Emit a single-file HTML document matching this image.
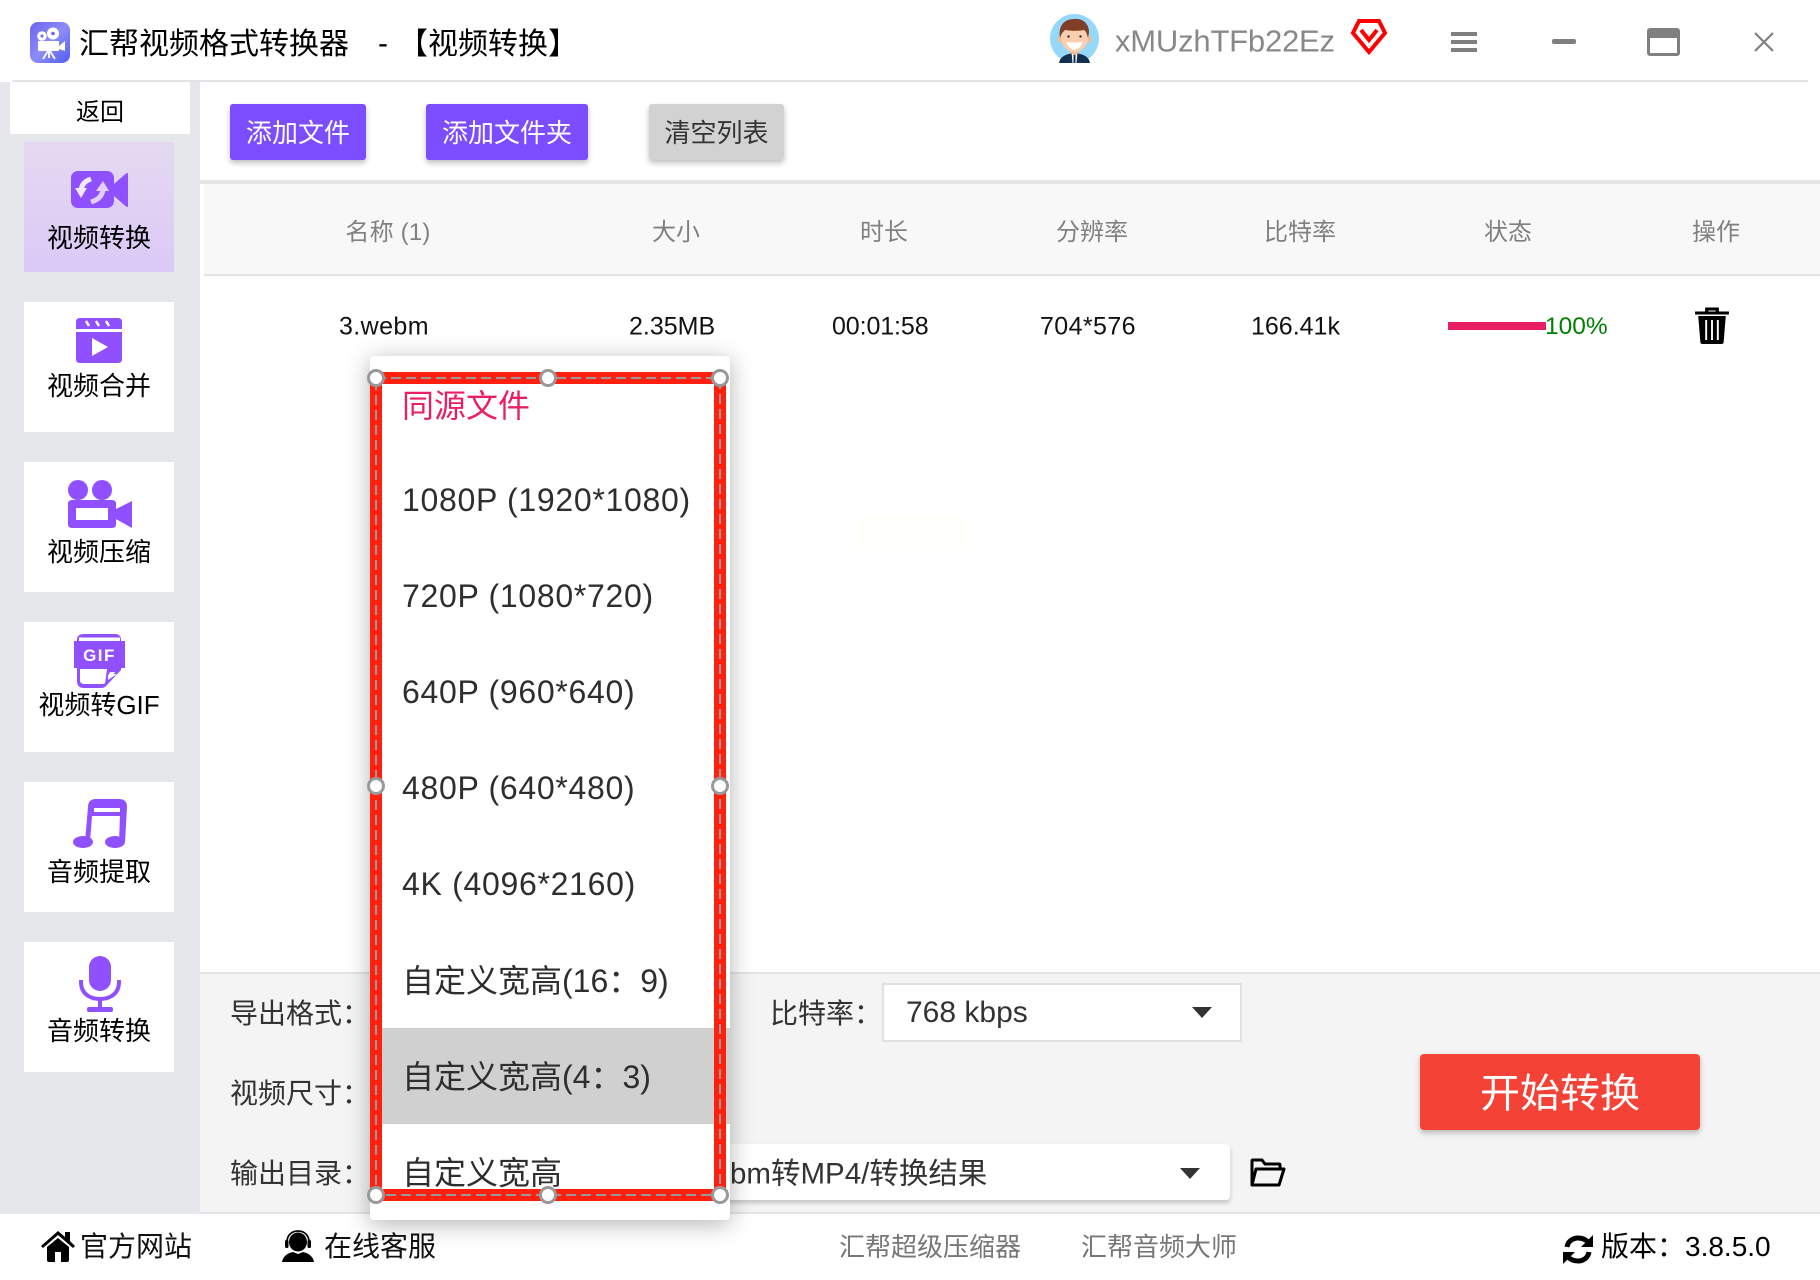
<!DOCTYPE html>
<html lang="zh-CN">
<head>
<meta charset="utf-8">
<title>汇帮视频格式转换器</title>
<style>
html,body{margin:0;padding:0;background:#fff}
#app{position:relative;width:1820px;height:1280px;overflow:hidden;background:#fff;font-family:"Liberation Sans","Noto Sans CJK SC",sans-serif;color:#000}
.a{position:absolute}
.t{position:absolute;white-space:nowrap;line-height:1;transform:translateY(-50%)}
.c{transform:translate(-50%,-50%)}
.nav{position:absolute;left:24px;width:150px;height:130px;background:#fff}
.btn{position:absolute;top:104px;height:56px;border-radius:3px;background:#7c4dff;color:#fff;font-size:26px;line-height:59px;text-align:center;box-shadow:0 3px 6px rgba(0,0,0,.25)}
.th{color:#808080;font-size:24px}
.td{font-size:25px;color:#111}
.it{position:absolute;left:0;width:360px;height:96px;line-height:98px;padding-left:32px;box-sizing:border-box;font-size:32px;color:#2e2e2e;white-space:nowrap}
.la{letter-spacing:.7px;line-height:96px}
.lab{font-size:28px;color:#333}
svg{position:absolute;display:block;overflow:visible}
</style>
</head>
<body>
<div id="app">
  <!-- title bar -->
  <svg style="left:30px;top:22px" width="40" height="41" viewBox="0 0 40 41">
    <defs><linearGradient id="lg" x1="0" y1="0" x2="1" y2="1"><stop offset="0" stop-color="#6a64ee"/><stop offset=".5" stop-color="#8d8cf8"/><stop offset="1" stop-color="#4f5cf0"/></linearGradient></defs>
    <rect width="40" height="41" rx="8" fill="url(#lg)"/>
    <circle cx="12" cy="14" r="4.8" fill="#fff"/><circle cx="23" cy="11.5" r="6" fill="#fff"/>
    <circle cx="12" cy="14" r="1.5" fill="#6a64ee"/><circle cx="23" cy="11.5" r="1.8" fill="#6a64ee"/>
    <path d="M8 19H29V29H8ZM29 24L35 19V29L29 27Z" fill="#fff"/>
    <path d="M18 29L13 37M19 29V36M20 29L25 37" stroke="#fff" stroke-width="1.8" fill="none"/>
  </svg>
  <div class="t" style="left:79px;top:45px;font-size:30px;color:#000">汇帮视频格式转换器</div>
  <div class="t" style="left:378px;top:44px;font-size:30px;color:#000">-</div>
  <div class="t" style="left:398px;top:45px;font-size:30px;color:#000">【视频转换】</div>

  <svg style="left:1050px;top:14px" width="49" height="49" viewBox="0 0 49 49">
    <circle cx="24.500" cy="24.500" r="24.500" fill="#95d8fb"/>
    <path d="M9 49c1-6 6-9 15.500-10 9.500 1 14.500 4 15.500 10Z" fill="#13304f"/>
    <path d="M21.500 38h6l-1 11h-4z" fill="#fff"/><path d="M23.500 40h2v9h-2z" fill="#13304f"/>
    <ellipse cx="10.500" cy="25" rx="2.800" ry="3.800" fill="#f2b995"/><ellipse cx="38.500" cy="25" rx="2.800" ry="3.800" fill="#f2b995"/>
    <path d="M20 32h9v7l-4.500 2-4.500-2z" fill="#f2b995"/>
    <ellipse cx="24.500" cy="24" rx="13.500" ry="14" fill="#f9cfae"/>
    <path d="M10 24c-2-12 4-19 14-19 10-1 15 6 15 13l-1 6c-1-4-2-7-4-8-5 1-13 1-19 0-2 2-4 4-5 8z" fill="#7e3f26"/>
    <path d="M16.500 27.500c4 1.500 12 1.500 16 0-1 6-5 8-8 8s-7-2-8-8z" fill="#fff"/>
    <circle cx="18.500" cy="22.500" r="1.200" fill="#333"/><circle cx="30.500" cy="22.500" r="1.200" fill="#333"/>
  </svg>
  <div class="t" style="left:1115px;top:41px;font-size:31px;color:#888;letter-spacing:-.2px">xMUzhTFb22Ez</div>
  <svg style="left:1351px;top:19px" width="36" height="35" viewBox="0 0 36 35">
    <path d="M8 2H28L34 14L18 33L2 14Z" fill="none" stroke="#f00" stroke-width="4" stroke-linejoin="miter"/>
    <path d="M10 11L18 21L26 11" fill="none" stroke="#f00" stroke-width="4"/>
  </svg>
  <div class="a" style="left:1451px;top:32px;width:26px;height:4px;background:#808080"></div>
  <div class="a" style="left:1451px;top:40px;width:26px;height:4px;background:#808080"></div>
  <div class="a" style="left:1451px;top:48px;width:26px;height:4px;background:#808080"></div>
  <div class="a" style="left:1552px;top:39px;width:24px;height:5px;border-radius:2px;background:#808080"></div>
  <div class="a" style="left:1647px;top:28px;width:33px;height:28px;box-sizing:border-box;border:3px solid #808080;border-top-width:10px;border-radius:3px"></div>
  <svg style="left:1754px;top:33px" width="20" height="18" viewBox="0 0 20 18"><path d="M1 0L19 18M19 0L1 18" stroke="#808080" stroke-width="2.200" fill="none"/></svg>
  <div class="a" style="left:12px;top:80px;width:1796px;height:2px;background:#e4e4e4"></div>

  <!-- sidebar -->
  <div class="a" style="left:0;top:82px;width:200px;height:1132px;background:#e5e7eb"></div>
  <div class="a" style="left:10px;top:82px;width:180px;height:52px;background:#fff"></div>
  <div class="t c" style="left:100px;top:113px;font-size:24px;color:#000">返回</div>

  <div class="nav" style="top:142px;background:linear-gradient(#e5d9f0,#dbc9f7)"></div>
  <div class="nav" style="top:302px"></div>
  <div class="nav" style="top:462px"></div>
  <div class="nav" style="top:622px"></div>
  <div class="nav" style="top:782px"></div>
  <div class="nav" style="top:942px"></div>

  <svg style="left:70px;top:169px" width="60" height="42" viewBox="0 0 60 42">
    <rect x="1" y="2" width="43" height="37" rx="7" fill="#8f50ff"/>
    <path d="M42 18L57 5V37L42 24Z" fill="#8f50ff" stroke="#8f50ff" stroke-width="2" stroke-linejoin="round"/>
    <path d="M21 10C15 12 12 15 11 21" fill="none" stroke="#f0e8fd" stroke-width="5"/>
    <path d="M5 19H17L11 29Z" fill="#f0e8fd"/>
    <path d="M21 33C28 31 32 27 33 21" fill="none" stroke="#e2d0fb" stroke-width="5"/>
    <path d="M26 22H39L33 12Z" fill="#e2d0fb"/>
  </svg>
  <div class="t c" style="left:99px;top:238px;font-size:26px;color:#000">视频转换</div>

  <svg style="left:76px;top:318px" width="46" height="45" viewBox="0 0 46 45">
    <path d="M0 11V4Q0 0 4 0H42Q46 0 46 4V11Z" fill="#9150ff"/>
    <path d="M10 3L13 8M20 3L23 8M30 3L33 8" stroke="#fff" stroke-width="2.500"/>
    <path d="M0 14H46V41Q46 45 42 45H4Q0 45 0 41Z" fill="#9150ff"/>
    <path d="M16 20L32 29L16 38Z" fill="#fff"/>
  </svg>
  <div class="t c" style="left:99px;top:386px;font-size:26px;color:#000">视频合并</div>

  <svg style="left:68px;top:480px" width="64" height="48" viewBox="0 0 64 48">
    <circle cx="10" cy="10" r="10" fill="#9150ff"/><circle cx="34" cy="10" r="10" fill="#9150ff"/>
    <path d="M4 20H44Q48 20 48 24V44Q48 48 44 48H4Q0 48 0 44V24Q0 20 4 20ZM8 28V40H40V28Z" fill="#9150ff" fill-rule="evenodd"/>
    <path d="M46 30L64 21V48L46 38Z" fill="#9150ff"/>
  </svg>
  <div class="t c" style="left:99px;top:552px;font-size:26px;color:#000">视频压缩</div>

  <svg style="left:74px;top:634px" width="51" height="54" viewBox="0 0 51 54">
    <path d="M10 0H41Q47 0 47 6V7H51V34H47V36L33 51Q31 54 27 54H10Q3 54 3 47V34H0V7H3V6Q3 0 10 0Z" fill="#9150ff"/>
    <path d="M5 3.500H46V7H5Z" fill="#fff"/>
    <path d="M6 35H44L30 50H10Q6 50 6 46Z" fill="#fff"/>
    <path d="M33 35H45L43 38H37Q35 38 35 41V46L31 50Z" fill="#9150ff"/>
    <path d="M34 46V42Q34 40 37 40H43Z" fill="#fff"/>
    <text x="25.500" y="27" text-anchor="middle" font-family="Liberation Sans,sans-serif" font-weight="700" font-size="17" fill="#fff" letter-spacing="1.500">GIF</text>
  </svg>
  <div class="t c" style="left:99px;top:705px;font-size:26px;color:#000">视频转GIF</div>

  <svg style="left:73px;top:799px" width="54" height="50" viewBox="0 0 54 50">
    <ellipse cx="10" cy="43" rx="10" ry="6" fill="#9150ff"/><ellipse cx="42" cy="43" rx="10" ry="6" fill="#9150ff"/>
    <path d="M12 43L15 8Q15 0 23 0H46Q54 0 54 8L52 43H46L47 17H19L17 43Z" fill="#9150ff"/>
    <path d="M21 9H47V13H21Z" fill="#fff"/>
  </svg>
  <div class="t c" style="left:99px;top:872px;font-size:26px;color:#000">音频提取</div>

  <svg style="left:79px;top:956px" width="42" height="56" viewBox="0 0 42 56">
    <rect x="10" y="0" width="22" height="35" rx="11" fill="#9150ff"/>
    <path d="M2 24V26C2 37 10 43 21 43S40 37 40 26V24" fill="none" stroke="#9150ff" stroke-width="4"/>
    <path d="M19 43H23V51H19Z" fill="#9150ff"/>
    <rect x="8" y="51" width="26" height="5" rx="2" fill="#9150ff"/>
  </svg>
  <div class="t c" style="left:99px;top:1031px;font-size:26px;color:#000">音频转换</div>

  <!-- toolbar -->
  <div class="btn" style="left:230px;width:136px">添加文件</div>
  <div class="btn" style="left:426px;width:162px">添加文件夹</div>
  <div class="btn" style="left:649px;width:135px;background:#d2d2d2;color:#333">清空列表</div>
  <div class="a" style="left:200px;top:180px;width:1620px;height:4px;background:#e4e4e4"></div>

  <!-- table -->
  <div class="a" style="left:204px;top:184px;width:1616px;height:90px;background:#f8f8f8"></div>
  <div class="a" style="left:204px;top:274px;width:1616px;height:2px;background:#e4e4e4"></div>
  <div class="t c th" style="left:388px;top:233px;letter-spacing:.2px">名称 (1)</div>
  <div class="t c th" style="left:676px;top:233px">大小</div>
  <div class="t c th" style="left:884px;top:233px">时长</div>
  <div class="t c th" style="left:1092px;top:233px">分辨率</div>
  <div class="t c th" style="left:1300px;top:233px">比特率</div>
  <div class="t c th" style="left:1508px;top:233px">状态</div>
  <div class="t c th" style="left:1716px;top:233px">操作</div>

  <div class="t td" style="left:339px;top:327px;letter-spacing:.4px">3.webm</div>
  <div class="t td" style="left:629px;top:327px">2.35MB</div>
  <div class="t td" style="left:832px;top:327px;letter-spacing:-.1px">00:01:58</div>
  <div class="t td" style="left:1040px;top:327px;letter-spacing:.4px">704*576</div>
  <div class="t td" style="left:1251px;top:327px">166.41k</div>
  <div class="a" style="left:1448px;top:322px;width:98px;height:8px;background:#e91e63"></div>
  <div class="t" style="left:1545px;top:327px;color:#008000;font-size:24.500px">100%</div>
  <svg style="left:1694px;top:307px" width="36" height="38" viewBox="0 0 34 38" preserveAspectRatio="none">
    <path d="M1 6H33M12 5V2H22V5" fill="none" stroke="#000" stroke-width="3"/>
    <path d="M4 9H30L28 35Q28 37 26 37H8Q6 37 6 35Z" fill="#000"/>
    <path d="M11.500 13V33M17 13V33M22.500 13V33" stroke="#fff" stroke-width="1.800"/>
  </svg>

  <!-- watermark -->
  <div class="a" style="left:854px;top:517px;width:116px;height:33px;background:#fffffc"></div>

  <!-- bottom panel -->
  <div class="a" style="left:200px;top:972px;width:1620px;height:242px;background:#f4f4f4"></div>
  <div class="a" style="left:200px;top:972px;width:1620px;height:2px;background:#e4e4e4"></div>
  <div class="a" style="left:200px;top:1212px;width:1620px;height:2px;background:#e4e4e4"></div>

  <div class="t lab" style="left:230px;top:1014px">导出格式：</div>
  <div class="t lab" style="left:230px;top:1094px">视频尺寸：</div>
  <div class="t lab" style="left:230px;top:1174px">输出目录：</div>
  <div class="t lab" style="left:770px;top:1014px">比特率：</div>

  <div class="a" style="left:882px;top:983px;width:360px;height:59px;box-sizing:border-box;background:#fff;border:2px solid #e0e0e0"></div>
  <div class="t" style="left:906px;top:1013px;font-size:30px;color:#333">768 kbps</div>
  <svg style="left:1192px;top:1007px" width="20" height="11" viewBox="0 0 20 11"><path d="M0 0H20L10 11Z" fill="#333"/></svg>

  <div class="a" style="left:600px;top:1144px;width:630px;height:56px;background:#fff;border-radius:4px;box-shadow:0 3px 5px rgba(0,0,0,.2)"></div>
  <div class="t" style="left:730px;top:1174px;font-size:29.500px;color:#333">bm转MP4/转换结果</div>
  <svg style="left:1180px;top:1168px" width="20" height="11" viewBox="0 0 20 11"><path d="M0 0H20L10 11Z" fill="#333"/></svg>
  <svg style="left:1250px;top:1158px" width="36" height="29" viewBox="0 0 36 29">
    <path d="M2 27V3Q2 2 3 2H12L15 6H29Q30 6 30 7V11M6 11H34L29 27H2Z" fill="none" stroke="#000" stroke-width="3" stroke-linejoin="round"/>
  </svg>

  <div class="a" style="left:1420px;top:1054px;width:280px;height:76px;border-radius:4px;background:#f44336;box-shadow:0 3px 6px rgba(0,0,0,.25);color:#fff;font-size:40px;line-height:81px;text-align:center">开始转换</div>

  <!-- footer -->
  <svg style="left:41px;top:1230px" width="34" height="32" viewBox="0 0 34 32">
    <path d="M0 16L17 1L24 7V2H29V11L34 16L32 18L17 5L2 18Z" fill="#000"/>
    <path d="M6 17L17 8L28 17V30Q28 32 26 32H20V22H14V32H8Q6 32 6 30Z" fill="#000"/>
  </svg>
  <div class="t" style="left:80px;top:1247px;font-size:28px;color:#111">官方网站</div>
  <svg style="left:282px;top:1230px" width="32" height="32" viewBox="0 0 32 32">
    <path d="M5 12C5 5 10 1 16 1S27 5 27 12" fill="none" stroke="#000" stroke-width="1.800"/>
    <rect x="3" y="10" width="3.500" height="8" rx="1.500" fill="#000"/><rect x="25.500" y="10" width="3.500" height="8" rx="1.500" fill="#000"/>
    <ellipse cx="16" cy="12" rx="9" ry="9.500" fill="#000"/>
    <path d="M0 32C1 26 6 23 11 22L16 24L21 22C26 23 31 26 32 32Z" fill="#000"/>
  </svg>
  <div class="t" style="left:324px;top:1247px;font-size:28px;color:#111">在线客服</div>
  <div class="t" style="left:839px;top:1247px;font-size:26px;color:#777">汇帮超级压缩器</div>
  <div class="t" style="left:1081px;top:1247px;font-size:26px;color:#777">汇帮音频大师</div>
  <svg style="left:1562px;top:1234px" width="32" height="31" viewBox="0 0 32 31">
    <path d="M5 13C6 7 11 4 16 4C20 4 23 5 26 8" fill="none" stroke="#000" stroke-width="5"/>
    <path d="M31 1V13H19Z" fill="#000"/>
    <path d="M27 18C26 24 21 27 16 27C12 27 9 26 6 23" fill="none" stroke="#000" stroke-width="5"/>
    <path d="M1 30V18H13Z" fill="#000"/>
  </svg>
  <div class="t" style="left:1601px;top:1247px;font-size:28px;color:#000">版本：3.8.5.0</div>

  <!-- dropdown -->
  <div class="a" style="left:370px;top:356px;width:360px;height:864px;background:#fff;border-radius:4px;box-shadow:0 4px 24px rgba(0,0,0,.3);overflow:hidden">
    <div class="it" style="top:2px;color:#e91e63;height:94px;line-height:96px">同源文件</div>
    <div class="it la" style="top:96px">1080P (1920*1080)</div>
    <div class="it la" style="top:192px">720P (1080*720)</div>
    <div class="it la" style="top:288px">640P (960*640)</div>
    <div class="it la" style="top:384px">480P (640*480)</div>
    <div class="it la" style="top:480px">4K (4096*2160)</div>
    <div class="it" style="top:576px">自定义宽高(16：9)</div>
    <div class="it" style="top:672px;background:#d0d0d0">自定义宽高(4：3)</div>
    <div class="it" style="top:768px">自定义宽高</div>
  </div>
  <!-- annotation frame -->
  <div class="a" style="left:370px;top:1201px;width:360px;height:19px;background:#fff;border-radius:0 0 4px 4px"></div>
  <div class="a" style="left:370px;top:372px;width:356px;height:829px;box-sizing:border-box;border:12px solid #ff2010"></div>
  <svg style="left:0;top:0" width="1820" height="1280" viewBox="0 0 1820 1280">
    <rect x="376" y="378" width="344" height="817" fill="none" stroke="#999" stroke-width="2" stroke-dasharray="10 5"/>
    <g fill="#fff" stroke="#999" stroke-width="3">
      <circle cx="376" cy="378" r="7.500"/><circle cx="548" cy="378" r="7.500"/><circle cx="720" cy="378" r="7.500"/>
      <circle cx="376" cy="786" r="7.500"/><circle cx="720" cy="786" r="7.500"/>
      <circle cx="376" cy="1195" r="7.500"/><circle cx="548" cy="1195" r="7.500"/><circle cx="720" cy="1195" r="7.500"/>
    </g>
  </svg>
</div>
</body>
</html>
